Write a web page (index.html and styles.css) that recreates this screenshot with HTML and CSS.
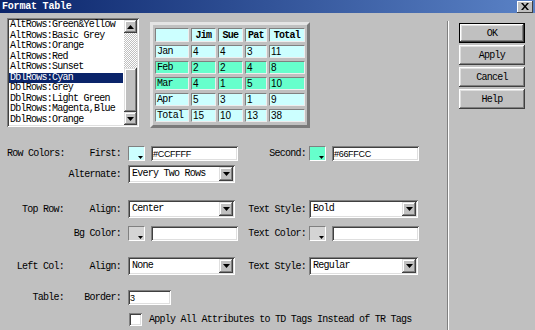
FILE: index.html
```html
<!DOCTYPE html>
<html lang="en">
  <head>
    <meta charset="UTF-8" />
    <title>Format Table</title>
    <link rel="stylesheet" href="styles.css">
  </head>
  <body>
    <div class="window">
      <div class="titlebar">
        <span class="title">Format Table</span>
        <span class="close">
          <svg width="8" height="7" viewBox="0 0 8 7"><path d="M0 0h2l2 2.5L6 0h2L5 3.5 8 7H6L4 4.5 2 7H0l3-3.5z" fill="#000"/></svg>
        </span>
      </div>

      <div class="content">
        <div class="main">
          <div class="top">
            <div class="listbox">
              <ul class="items">
                <li>AltRows:Green&amp;Yellow</li>
                <li>AltRows:Basic Grey</li>
                <li>AltRows:Orange</li>
                <li>AltRows:Red</li>
                <li>AltRows:Sunset</li>
                <li class="selected">DblRows:Cyan</li>
                <li>DblRows:Grey</li>
                <li>DblRows:Light Green</li>
                <li>DblRows:Magenta,Blue</li>
                <li>DblRows:Orange</li>
              </ul>
              <div class="scrollbar">
                <div class="sb-btn">
                  <svg width="7" height="4" viewBox="0 0 7 4"><path d="M3.5 0L7 4H0z" fill="#000"/></svg>
                </div>
                <div class="sb-track"></div>
                <div class="sb-thumb"></div>
                <div class="sb-btn">
                  <svg width="7" height="4" viewBox="0 0 7 4"><path d="M0 0h7L3.5 4z" fill="#000"/></svg>
                </div>
              </div>
            </div>

            <table class="preview">
              <tr class="head">
                <th class="c1"></th>
                <th class="c2">Jim</th>
                <th class="c3">Sue</th>
                <th class="c4">Pat</th>
                <th class="c5">Total</th>
              </tr>
              <tr>
                <td>Jan</td><td class="num">4</td><td class="num">4</td><td class="num">3</td><td class="num">11</td>
              </tr>
              <tr class="dbl">
                <td>Feb</td><td class="num">2</td><td class="num">2</td><td class="num">4</td><td class="num">8</td>
              </tr>
              <tr class="dbl">
                <td>Mar</td><td class="num">4</td><td class="num">1</td><td class="num">5</td><td class="num">10</td>
              </tr>
              <tr>
                <td>Apr</td><td class="num">5</td><td class="num">3</td><td class="num">1</td><td class="num">9</td>
              </tr>
              <tr>
                <td>Total</td><td class="num">15</td><td class="num">10</td><td class="num">13</td><td class="num">38</td>
              </tr>
            </table>
          </div>

          <div class="form">
            <div class="row row-colors">
              <span class="section">Row Colors:</span>
              <span class="label">First:</span>
              <span class="field">
                <span class="swatch cyan"><svg class="swatch-arrow" width="5" height="3" viewBox="0 0 5 3"><path d="M0 0h5L2.5 3z" fill="#000"/></svg></span>
                <span class="textbox"><span class="hex">#CCFFFF</span></span>
              </span>
              <span class="label">Second:</span>
              <span class="field right">
                <span class="swatch green"><svg class="swatch-arrow" width="5" height="3" viewBox="0 0 5 3"><path d="M0 0h5L2.5 3z" fill="#000"/></svg></span>
                <span class="textbox"><span class="hex">#66FFCC</span></span>
              </span>
            </div>

            <div class="row row-alt">
              <span class="section"></span>
              <span class="label">Alternate:</span>
              <span class="field">
                <span class="select">
                  <span class="sel-text">Every Two Rows</span>
                  <span class="sel-btn"><svg width="7" height="4" viewBox="0 0 7 4"><path d="M0 0h7L3.5 4z" fill="#000"/></svg></span>
                </span>
              </span>
            </div>

            <div class="row row-top">
              <span class="section">Top Row:</span>
              <span class="label">Align:</span>
              <span class="field">
                <span class="select">
                  <span class="sel-text">Center</span>
                  <span class="sel-btn"><svg width="7" height="4" viewBox="0 0 7 4"><path d="M0 0h7L3.5 4z" fill="#000"/></svg></span>
                </span>
              </span>
              <span class="label">Text Style:</span>
              <span class="field right">
                <span class="select wide">
                  <span class="sel-text">Bold</span>
                  <span class="sel-btn"><svg width="7" height="4" viewBox="0 0 7 4"><path d="M0 0h7L3.5 4z" fill="#000"/></svg></span>
                </span>
              </span>
            </div>

            <div class="row row-bg">
              <span class="section"></span>
              <span class="label">Bg Color:</span>
              <span class="field">
                <span class="swatch empty"><svg class="swatch-arrow" width="5" height="3" viewBox="0 0 5 3"><path d="M0 0h5L2.5 3z" fill="#000"/></svg></span>
                <span class="textbox"></span>
              </span>
              <span class="label">Text Color:</span>
              <span class="field right">
                <span class="swatch empty"><svg class="swatch-arrow" width="5" height="3" viewBox="0 0 5 3"><path d="M0 0h5L2.5 3z" fill="#000"/></svg></span>
                <span class="textbox"></span>
              </span>
            </div>

            <div class="row row-left">
              <span class="section">Left Col:</span>
              <span class="label">Align:</span>
              <span class="field">
                <span class="select">
                  <span class="sel-text">None</span>
                  <span class="sel-btn"><svg width="7" height="4" viewBox="0 0 7 4"><path d="M0 0h7L3.5 4z" fill="#000"/></svg></span>
                </span>
              </span>
              <span class="label">Text Style:</span>
              <span class="field right">
                <span class="select wide">
                  <span class="sel-text">Regular</span>
                  <span class="sel-btn"><svg width="7" height="4" viewBox="0 0 7 4"><path d="M0 0h7L3.5 4z" fill="#000"/></svg></span>
                </span>
              </span>
            </div>

            <div class="row row-table">
              <span class="section">Table:</span>
              <span class="label">Border:</span>
              <span class="field">
                <span class="textbox small"><span class="hex">3</span></span>
              </span>
            </div>

            <div class="row row-check">
              <span class="section"></span>
              <span class="label"></span>
              <span class="field check-field">
                <span class="checkbox"></span>
                <span class="check-label">Apply All Attributes to TD Tags Instead of TR Tags</span>
              </span>
            </div>
          </div>
        </div>

        <div class="divider"></div>

        <div class="actions">
          <div class="button default">OK</div>
          <div class="button">Apply</div>
          <div class="button">Cancel</div>
          <div class="button">Help</div>
        </div>
      </div>
    </div>
  </body>
</html>
```

FILE: styles.css
```css
body {
    margin: 0;
    background-color: #C0C0C0;
    font-family: "Liberation Mono", monospace;
    font-size: 10px;
    letter-spacing: -0.75px;
    color: #000;
}

.window {
    width: 535px;
    height: 330px;
    overflow: hidden;
    display: flex;
    flex-direction: column;
}

/* Title bar */
.titlebar {
    height: 13px;
    display: flex;
    align-items: center;
    justify-content: space-between;
    padding: 0 2px;
    background: linear-gradient(to right, #0A246A, #5A82C6);
}

.title {
    color: #fff;
    font-weight: bold;
    letter-spacing: -0.2px;
}

.close {
    width: 16px;
    height: 12px;
    box-sizing: border-box;
    display: flex;
    align-items: center;
    justify-content: center;
    background-color: #C0C0C0;
    box-shadow: inset -1px -1px #404040, inset 1px 1px #fff;
}

.content {
    flex: 1;
    display: flex;
}

.main {
    width: 447px;
    box-sizing: border-box;
    padding: 5px 0 0 7px;
}

/* Preset list + preview */
.top {
    display: flex;
    align-items: flex-start;
    height: 115px;
}

.listbox {
    width: 132px;
    height: 109px;
    box-sizing: border-box;
    padding: 2px;
    display: flex;
    background-color: #fff;
    box-shadow: inset 1px 1px #808080, inset -1px -1px #fff, inset 2px 2px #404040, inset -2px -2px #DFDFDF;
}

.items {
    flex: 1;
    list-style: none;
    margin: 0;
    padding: 0;
}

.items li {
    height: 10.5px;
    line-height: 10.5px;
    padding-left: 1px;
    margin-right: 1px;
    white-space: nowrap;
}

.items li.selected {
    background-color: #0A246A;
    color: #fff;
}

.scrollbar {
    width: 13px;
    display: flex;
    flex-direction: column;
}

.sb-btn {
    height: 13px;
    display: flex;
    align-items: center;
    justify-content: center;
    background-color: #C0C0C0;
    box-shadow: inset -1px -1px #404040, inset 1px 1px #DFDFDF, inset -2px -2px #808080, inset 2px 2px #fff;
}

.sb-track {
    flex: 1;
    background: repeating-conic-gradient(#fff 0 25%, #C0C0C0 0 50%) 0 0 / 2px 2px;
}

.sb-thumb {
    height: 44px;
    background-color: #C0C0C0;
    box-shadow: inset -1px -1px #404040, inset 1px 1px #DFDFDF, inset -2px -2px #808080, inset 2px 2px #fff;
}

.preview {
    margin: 4px 0 0 11px;
    border-collapse: separate;
    border-spacing: 2px 3px;
    border: 3px solid;
    border-color: #E4E4E4 #7A7A7A #7A7A7A #E4E4E4;
}

.preview th,
.preview td {
    box-sizing: border-box;
    height: 13px;
    padding: 0 1px;
    border: 1px solid;
    border-color: #808080 #EEEEEE #EEEEEE #808080;
    background-color: #CCFFFF;
    text-align: left;
    line-height: 11px;
    white-space: nowrap;
}

.preview th {
    height: 14px;
    text-align: center;
    font-weight: bold;
}

.preview .dbl td {
    background-color: #66FFCC;
}

.preview .num {
    font-family: "Liberation Sans", sans-serif;
    letter-spacing: 0;
}

.c1 { width: 34px; }
.c2 { width: 25px; }
.c3 { width: 25px; }
.c4 { width: 22px; }
.c5 { width: 36px; }

/* Form rows */
.form {
    margin-top: 13px;
}

.row {
    display: grid;
    grid-template-columns: 57px 57px 117px 68px auto;
    align-items: center;
}

.section,
.label {
    text-align: right;
    white-space: nowrap;
}

.field {
    display: flex;
    align-items: center;
    gap: 6px;
    margin-left: 7px;
}

.field.right {
    margin-left: 3px;
}

.row-colors { height: 15px; }
.row-alt { height: 18px; margin-top: 4px; }
.row-top { height: 18px; margin-top: 17px; }
.row-bg { height: 15px; margin-top: 8px; }
.row-left { height: 18px; margin-top: 16px; }
.row-table { height: 15px; margin-top: 15px; }
.row-check { height: 13px; margin-top: 8px; }

.swatch {
    position: relative;
    width: 17px;
    height: 15px;
    box-sizing: border-box;
    border: 1px solid;
    border-color: #808080 #fff #fff #808080;
}

.swatch.cyan { background-color: #CCFFFF; }
.swatch.green { background-color: #66FFCC; }
.swatch.empty { background-color: #D4D4D4; }

.swatch-arrow {
    position: absolute;
    right: 1px;
    bottom: 1px;
}

.textbox {
    width: 87px;
    height: 15px;
    box-sizing: border-box;
    padding: 2px 2px 0;
    background-color: #fff;
    box-shadow: inset 1px 1px #808080, inset -1px -1px #fff, inset 2px 2px #404040, inset -2px -2px #DFDFDF;
}

.textbox.small {
    width: 43px;
}

.hex {
    font-family: "Liberation Sans", sans-serif;
    font-size: 9px;
    letter-spacing: -0.3px;
    line-height: 12px;
    display: block;
}

.select {
    width: 107px;
    height: 18px;
    box-sizing: border-box;
    padding: 2px;
    display: flex;
    background-color: #fff;
    box-shadow: inset 1px 1px #808080, inset -1px -1px #fff, inset 2px 2px #404040, inset -2px -2px #DFDFDF;
}

.select.wide {
    width: 109px;
}

.sel-text {
    flex: 1;
    padding-left: 2px;
    line-height: 14px;
}

.sel-btn {
    width: 14px;
    display: flex;
    align-items: center;
    justify-content: center;
    background-color: #C0C0C0;
    box-shadow: inset -1px -1px #404040, inset 1px 1px #DFDFDF, inset -2px -2px #808080, inset 2px 2px #fff;
}

.check-field {
    grid-column: 3 / 6;
    gap: 7px;
    margin-left: 8px;
}

.checkbox {
    width: 13px;
    height: 13px;
    box-sizing: border-box;
    background-color: #fff;
    box-shadow: inset 1px 1px #808080, inset -1px -1px #fff, inset 2px 2px #404040, inset -2px -2px #DFDFDF;
}

.check-label {
    white-space: nowrap;
}

/* Divider and buttons */
.divider {
    width: 0;
    margin-top: 8px;
    border-left: 1px solid #808080;
    border-right: 1px solid #fff;
}

.actions {
    padding: 10px 0 0 10px;
    display: flex;
    flex-direction: column;
    gap: 2px;
}

.button {
    width: 66px;
    height: 20px;
    box-sizing: border-box;
    display: flex;
    align-items: center;
    justify-content: center;
    background-color: #C0C0C0;
    box-shadow: inset -1px -1px #404040, inset 1px 1px #fff, inset -2px -2px #808080, inset 2px 2px #DFDFDF;
}

.button.default {
    border: 1px solid #000;
}
```
